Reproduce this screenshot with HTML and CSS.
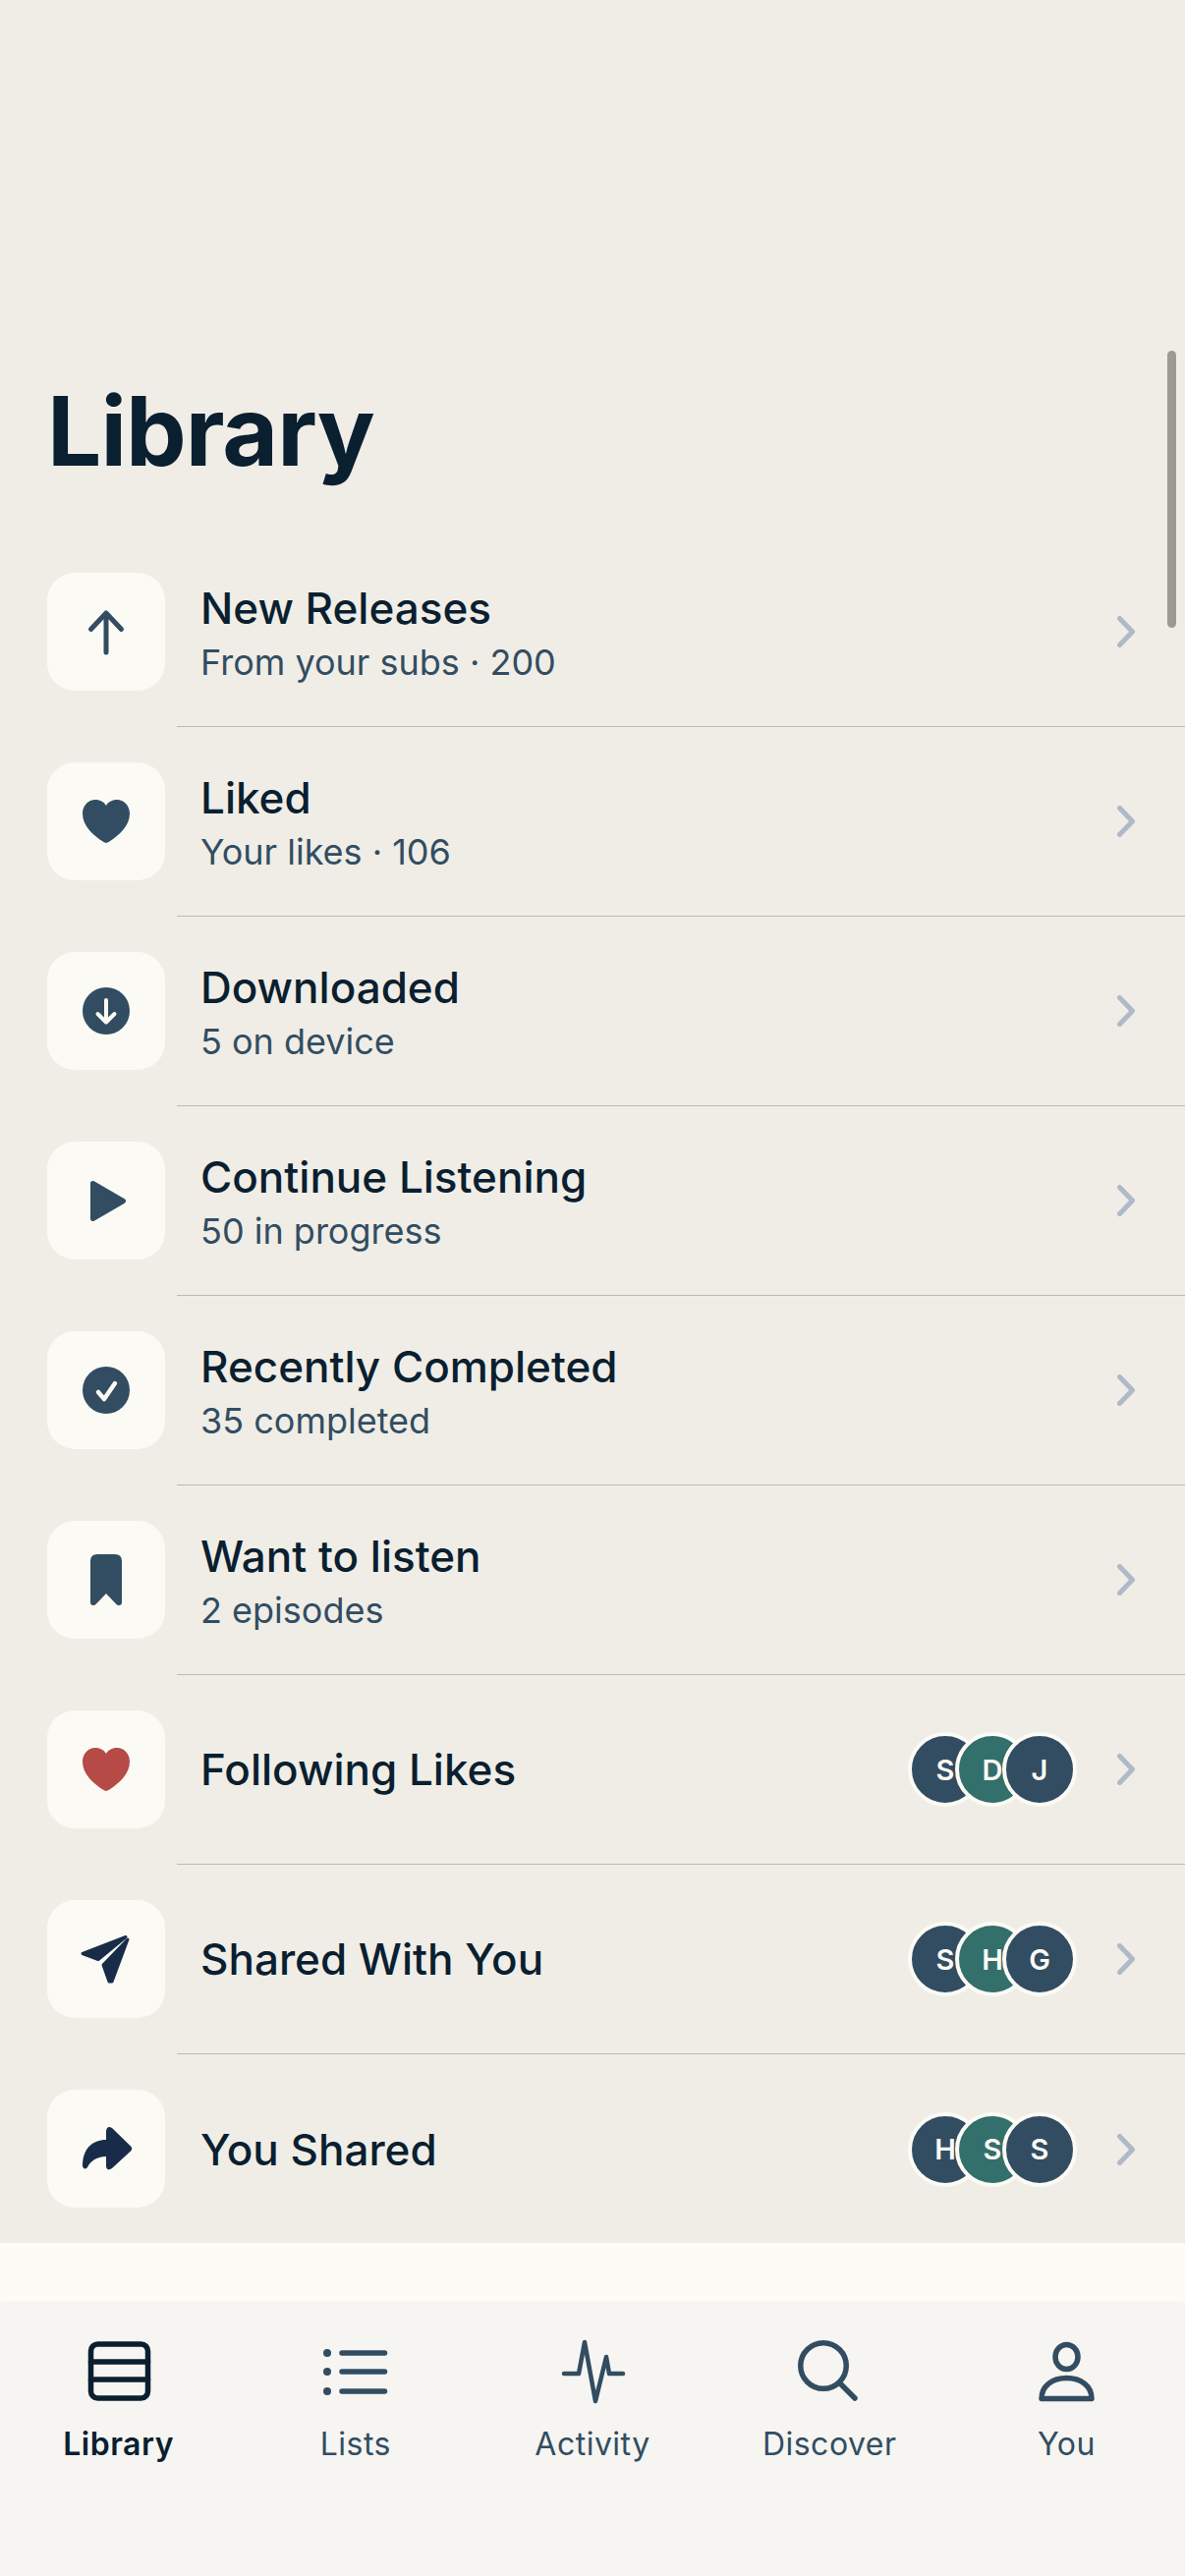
FILE: index.html
```html
<!DOCTYPE html>
<html>

<head>
    <meta charset="UTF-8">
    <title>Library</title>
    <link rel="stylesheet" href="styles.css">
</head>

<body>
    <div class="screen">
        <div class="content">
            <h1 class="title">Library</h1>
            <div class="scroll-thumb"></div>
            <div class="list">
                <div class="row">
                    <div class="icon-box">
                        <svg class="icon" viewBox="0 0 60 60">
                            <path class="line" d="M30 51V12M14.500 27.500 30 11l15.500 16.500" />
                        </svg>
                    </div>
                    <div class="row-main">
                        <div class="row-text">
                            <div class="row-title">New Releases</div>
                            <div class="row-sub">From your subs · 200</div>
                        </div>
                        <svg class="chevron" viewBox="0 0 18 32">
                            <path d="M2.500 2.500 15.500 16 2.500 29.500" />
                        </svg>
                    </div>
                </div>
                <div class="row">
                    <div class="icon-box">
                        <svg class="icon" viewBox="0 0 60 60">
                            <path class="fill" d="M30 52c-1 0-2-.5-3-1.200C17 44 6 35 6 22 6 14 12 8 19 8c5 0 9 2.500 11 6 2-3.500 6-6 11-6 7 0 13 6 13 14 0 13-11 22-21 28.800-1 .7-2 1.200-3 1.200z" />
                        </svg>
                    </div>
                    <div class="row-main">
                        <div class="row-text">
                            <div class="row-title">Liked</div>
                            <div class="row-sub">Your likes · 106</div>
                        </div>
                        <svg class="chevron" viewBox="0 0 18 32">
                            <path d="M2.500 2.500 15.500 16 2.500 29.500" />
                        </svg>
                    </div>
                </div>
                <div class="row">
                    <div class="icon-box">
                        <svg class="icon" viewBox="0 0 60 60">
                            <circle class="fill" cx="30" cy="30" r="24" />
                            <path class="line-white" d="M30 19v22M21.500 33 30 41.500 38.500 33" />
                        </svg>
                    </div>
                    <div class="row-main">
                        <div class="row-text">
                            <div class="row-title">Downloaded</div>
                            <div class="row-sub">5 on device</div>
                        </div>
                        <svg class="chevron" viewBox="0 0 18 32">
                            <path d="M2.500 2.500 15.500 16 2.500 29.500" />
                        </svg>
                    </div>
                </div>
                <div class="row">
                    <div class="icon-box">
                        <svg class="icon" viewBox="0 0 60 60">
                            <path class="fill round" d="M16.500 12.500 47.500 30.500 16.500 48.500z" />
                        </svg>
                    </div>
                    <div class="row-main">
                        <div class="row-text">
                            <div class="row-title">Continue Listening</div>
                            <div class="row-sub">50 in progress</div>
                        </div>
                        <svg class="chevron" viewBox="0 0 18 32">
                            <path d="M2.500 2.500 15.500 16 2.500 29.500" />
                        </svg>
                    </div>
                </div>
                <div class="row">
                    <div class="icon-box">
                        <svg class="icon" viewBox="0 0 60 60">
                            <circle class="fill" cx="30" cy="30" r="24" />
                            <path class="line-white check" d="M22 32l6 7 11-16" />
                        </svg>
                    </div>
                    <div class="row-main">
                        <div class="row-text">
                            <div class="row-title">Recently Completed</div>
                            <div class="row-sub">35 completed</div>
                        </div>
                        <svg class="chevron" viewBox="0 0 18 32">
                            <path d="M2.500 2.500 15.500 16 2.500 29.500" />
                        </svg>
                    </div>
                </div>
                <div class="row">
                    <div class="icon-box">
                        <svg class="icon" viewBox="0 0 60 60">
                            <path class="fill" d="M14 11q0-7 7-7h18q7 0 7 7v42q0 3-3 3-1.500 0-2.500-1L30 44 19.500 55q-1 1-2.500 1-3 0-3-3z" />
                        </svg>
                    </div>
                    <div class="row-main">
                        <div class="row-text">
                            <div class="row-title">Want to listen</div>
                            <div class="row-sub">2 episodes</div>
                        </div>
                        <svg class="chevron" viewBox="0 0 18 32">
                            <path d="M2.500 2.500 15.500 16 2.500 29.500" />
                        </svg>
                    </div>
                </div>
                <div class="row">
                    <div class="icon-box">
                        <svg class="icon" viewBox="0 0 60 60">
                            <path class="fill-red" d="M30 52c-1 0-2-.5-3-1.200C17 44 6 35 6 22 6 14 12 8 19 8c5 0 9 2.500 11 6 2-3.500 6-6 11-6 7 0 13 6 13 14 0 13-11 22-21 28.800-1 .7-2 1.200-3 1.200z" />
                        </svg>
                    </div>
                    <div class="row-main">
                        <div class="row-text">
                            <div class="row-title">Following Likes</div>
                        </div>
                        <div class="avatars">
                            <div class="avatar">S</div>
                            <div class="avatar green">D</div>
                            <div class="avatar">J</div>
                        </div>
                        <svg class="chevron" viewBox="0 0 18 32">
                            <path d="M2.500 2.500 15.500 16 2.500 29.500" />
                        </svg>
                    </div>
                </div>
                <div class="row">
                    <div class="icon-box">
                        <svg class="icon" viewBox="0 0 60 60">
                            <path class="fill-navy round-thin" d="M50 7.500 6 24.500 22 30.500z" />
                            <path class="fill-navy round-thin" d="M52 10 36 53 33 53 27 36z" />
                        </svg>
                    </div>
                    <div class="row-main">
                        <div class="row-text">
                            <div class="row-title">Shared With You</div>
                        </div>
                        <div class="avatars">
                            <div class="avatar">S</div>
                            <div class="avatar green">H</div>
                            <div class="avatar">G</div>
                        </div>
                        <svg class="chevron" viewBox="0 0 18 32">
                            <path d="M2.500 2.500 15.500 16 2.500 29.500" />
                        </svg>
                    </div>
                </div>
                <div class="row last">
                    <div class="icon-box">
                        <svg class="icon" viewBox="0 0 60 60">
                            <path class="fill-navy" d="M36 9 55 27.500q2.500 2.500 0 5L36 50q-5 3.500-6-2V38C20 38 14 43 11 49q-3 3.500-5-1C6 30 16 21 30 21V12q1-6 6-3z" />
                        </svg>
                    </div>
                    <div class="row-main">
                        <div class="row-text">
                            <div class="row-title">You Shared</div>
                        </div>
                        <div class="avatars">
                            <div class="avatar">H</div>
                            <div class="avatar green">S</div>
                            <div class="avatar">S</div>
                        </div>
                        <svg class="chevron" viewBox="0 0 18 32">
                            <path d="M2.500 2.500 15.500 16 2.500 29.500" />
                        </svg>
                    </div>
                </div>
            </div>
        </div>
        <div class="mini-band"></div>
        <div class="tabbar">
            <div class="tab active">
                <svg class="tab-icon" viewBox="0 0 80 68">
                    <rect x="11.500" y="6" width="58" height="55" rx="7" />
                    <path d="M11.500 24h58M11.500 42h58" />
                </svg>
                <span class="tab-label">Library</span>
            </div>
            <div class="tab">
                <svg class="tab-icon" viewBox="0 0 80 68">
                    <circle class="dot" cx="11" cy="15" r="4" />
                    <circle class="dot" cx="11" cy="34" r="4" />
                    <circle class="dot" cx="11" cy="54" r="4" />
                    <path d="M26 15h43.500M26 34h43.500M26 54h43.500" />
                </svg>
                <span class="tab-label">Lists</span>
            </div>
            <div class="tab">
                <svg class="tab-icon thin" viewBox="0 0 80 68">
                    <path d="M11 36h15l6-32 11 60 11-45 3 17h14" />
                </svg>
                <span class="tab-label">Activity</span>
            </div>
            <div class="tab">
                <svg class="tab-icon" viewBox="0 0 80 68">
                    <circle cx="34" cy="28" r="23.250" />
                    <path d="M51 46 66 61" />
                </svg>
                <span class="tab-label">Discover</span>
            </div>
            <div class="tab">
                <svg class="tab-icon" viewBox="0 0 80 68">
                    <ellipse cx="40.500" cy="19" rx="11.500" ry="12.500" />
                    <path d="M15 61.500c0-13 11-21 25.500-21S66 48.500 66 61.500z" />
                </svg>
                <span class="tab-label">You</span>
            </div>
        </div>
    </div>
</body>

</html>
```

FILE: styles.css
```css
* {
    box-sizing: border-box;
}

body {
    margin: 0;
    background-color: #f0ede6;
    font-family: Inter, "Noto Sans", sans-serif;
    color: #0a1f30;
}

.screen {
    width: 1206px;
    height: 2622px;
    display: flex;
    flex-direction: column;
    overflow: hidden;
}

.content {
    position: relative;
    height: 2283px;
    padding-top: 379px;
    background-color: #f0ede6;
}

.title {
    margin: 0 0 48px 48px;
    height: 120px;
    font-size: 98px;
    line-height: 120px;
    font-weight: 700;
    letter-spacing: -1px;
}

.scroll-thumb {
    position: absolute;
    top: 357px;
    right: 9px;
    width: 9px;
    height: 282px;
    border-radius: 5px;
    background-color: #9c9b93;
}

.row {
    display: flex;
    align-items: stretch;
    padding-left: 48px;
    height: 193px;
}

.icon-box {
    flex: none;
    width: 120px;
    height: 120px;
    margin-top: 36px;
    display: flex;
    align-items: center;
    justify-content: center;
    border-radius: 28px;
    background-color: #fbfaf4;
}

.icon {
    width: 60px;
    height: 60px;
}

.line {
    fill: none;
    stroke: #324d62;
    stroke-width: 5;
    stroke-linecap: round;
    stroke-linejoin: round;
}

.line-white {
    fill: none;
    stroke: #fbfaf4;
    stroke-width: 4;
    stroke-linecap: round;
    stroke-linejoin: round;
}

.line-white.check {
    stroke-width: 4.500;
}

.fill {
    fill: #324d62;
}

.fill-red {
    fill: #b54a46;
}

.fill-navy {
    fill: #182c4a;
}

.round {
    stroke: #324d62;
    stroke-width: 5;
    stroke-linejoin: round;
}

.round-thin {
    stroke: #182c4a;
    stroke-width: 3;
    stroke-linejoin: round;
}

.row-main {
    flex: 1;
    display: flex;
    align-items: center;
    margin-left: 12px;
    padding: 0 51px 0 24px;
    border-bottom: 1.500px solid #bdbab2;
}

.last .row-main {
    border-bottom: none;
}

.row-text {
    flex: 1;
}

.row-title {
    font-size: 44px;
    line-height: 56px;
    font-weight: 500;
}

.row-sub {
    margin-top: 3.500px;
    margin-bottom: -1.500px;
    font-size: 36px;
    line-height: 46px;
    color: #324d62;
}

.chevron {
    flex: none;
    width: 18px;
    height: 32px;
    fill: none;
    stroke: #b0b9c9;
    stroke-width: 5;
    stroke-linecap: round;
    stroke-linejoin: round;
}

.avatars {
    display: flex;
    margin-right: 41px;
}

.avatar {
    width: 76px;
    height: 76px;
    display: flex;
    align-items: center;
    justify-content: center;
    margin-left: -28px;
    border: 4px solid #fbfaf4;
    border-radius: 50%;
    background-color: #324d62;
    color: #fbfaf4;
    font-size: 29px;
    font-weight: 600;
}

.avatar:first-child {
    margin-left: 0;
}

.avatar.green {
    background-color: #336f6b;
}

.mini-band {
    height: 62px;
    background-color: #fcfbf6;
}

.tabbar {
    flex: 1;
    display: grid;
    grid-template-columns: repeat(5, 1fr);
    padding-top: 35px;
    background-color: #f6f5f1;
    box-shadow: 0 -1px 4px rgba(10, 31, 48, 0.06);
}

.tab {
    display: flex;
    flex-direction: column;
    align-items: center;
    color: #324d62;
}

.tab-icon {
    width: 80px;
    height: 68px;
    fill: none;
    stroke: #324d62;
    stroke-width: 5.500;
    stroke-linecap: round;
    stroke-linejoin: round;
}

.tab-icon.thin {
    stroke-width: 4.500;
}

.tab-icon .dot {
    fill: #324d62;
    stroke: none;
}

.tab-label {
    margin-top: 20px;
    font-size: 32px;
    line-height: 40px;
    letter-spacing: 0.5px;
}

.tab.active {
    color: #0a1f30;
}

.tab.active .tab-icon {
    stroke: #0a1f30;
}

.tab.active .tab-label {
    font-weight: 600;
}
```
